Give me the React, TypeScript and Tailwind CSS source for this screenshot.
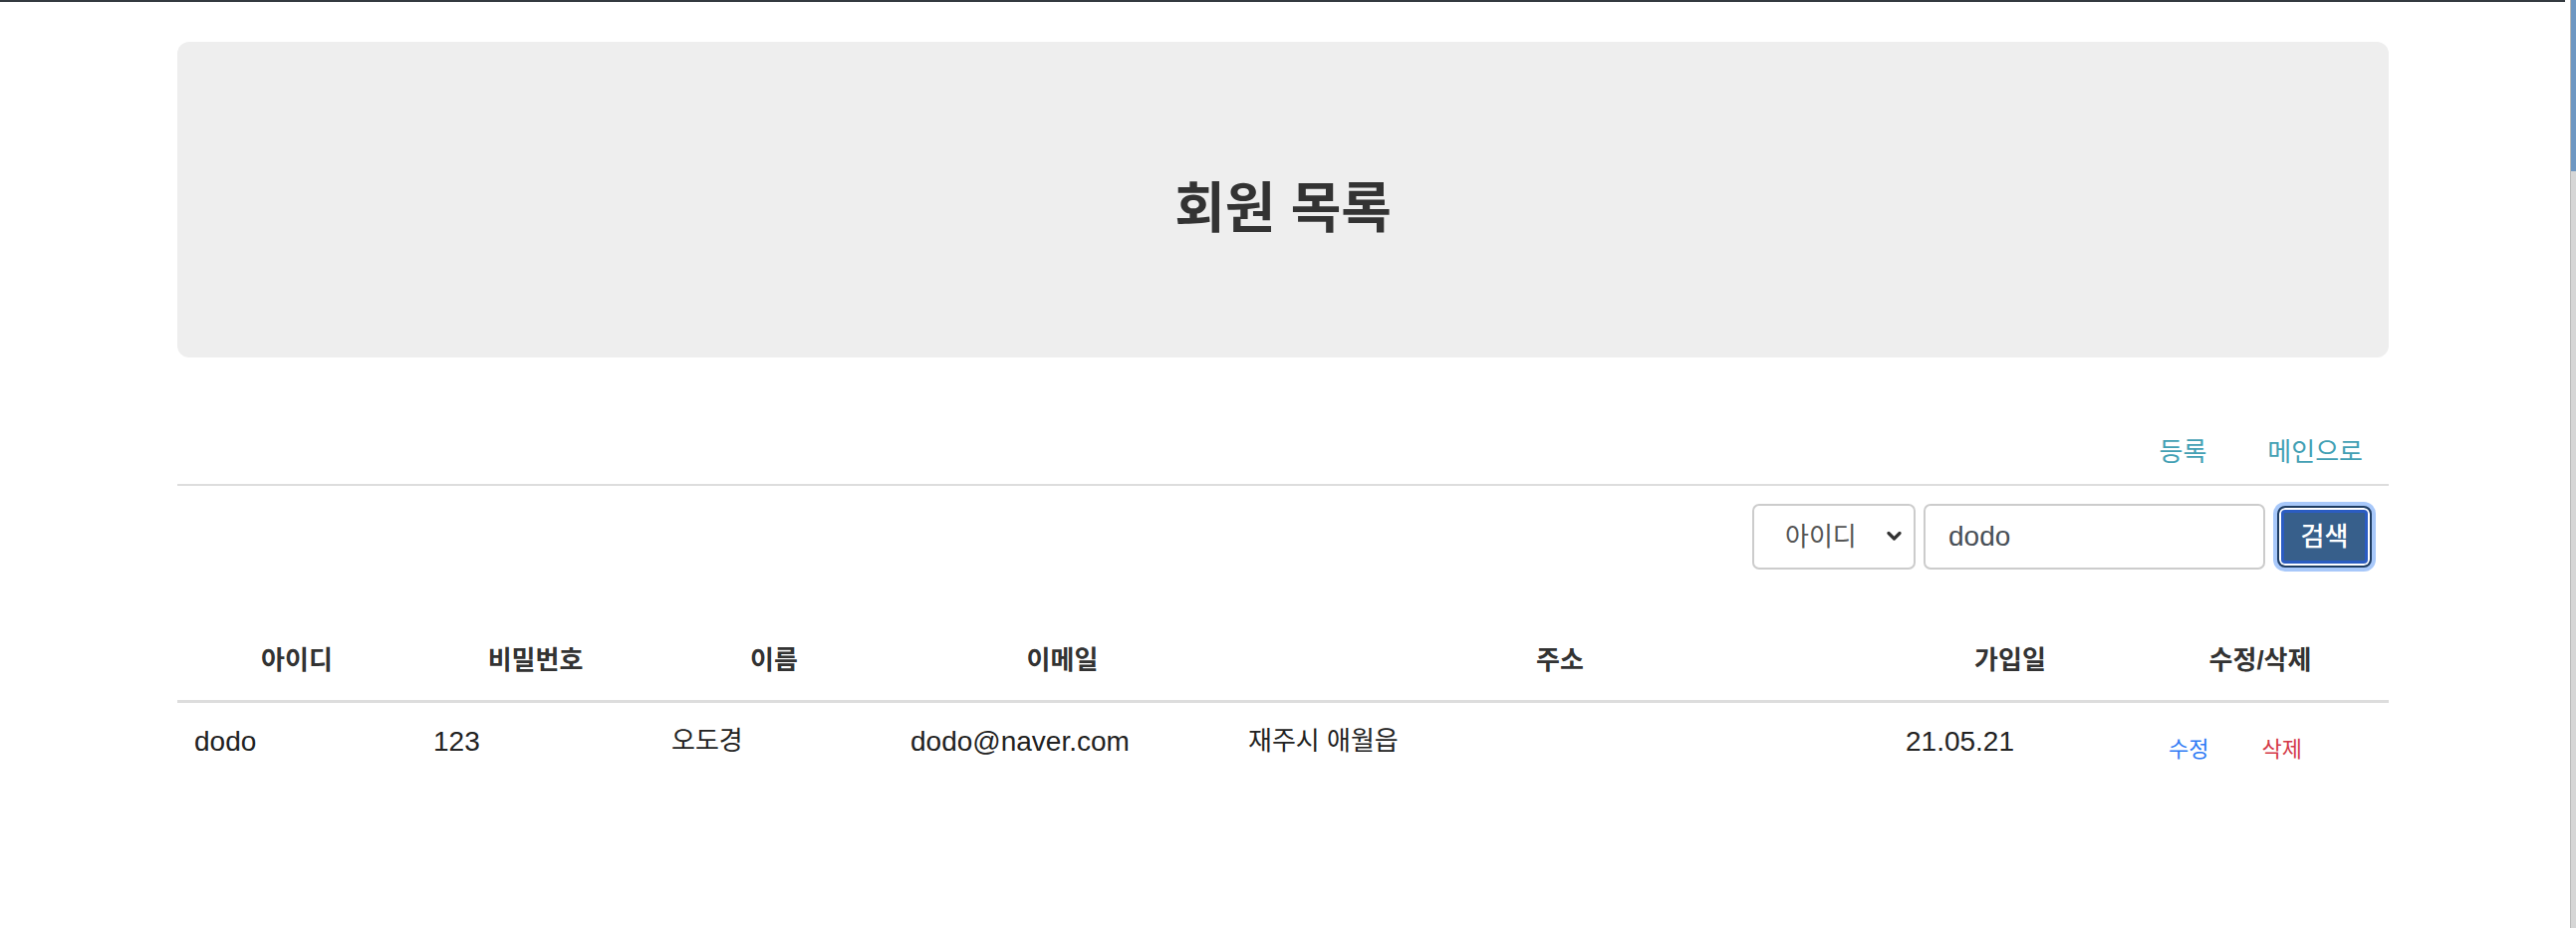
import React from 'react';

const FONT = { fontFamily: '"Liberation Sans", "Noto Sans CJK KR", sans-serif' };

const columns = [
  { label: '아이디', w: 'w-[240px]' },
  { label: '비밀번호', w: 'w-[239px]' },
  { label: '이름', w: 'w-[240px]' },
  { label: '이메일', w: 'w-[339px]' },
  { label: '주소', w: 'w-[660px]' },
  { label: '가입일', w: 'w-[244px]' },
  { label: '수정/삭제', w: 'w-[258px]' },
];

const members = [
  { id: 'dodo', pw: '123', name: '오도경', email: 'dodo@naver.com', addr: '재주시 애월읍', joined: '21.05.21' },
];

const td = 'px-[17px] pt-[19px] pb-[20px] leading-[39px] text-[#222222]';

export default function App() {
  return (
    <div className="flex min-h-screen bg-white text-[#212529]" style={FONT}>
      <div className="flex-1 border-t-2 border-[#343a40]">
        <div className="ml-[178px] w-[2220px]">
          {/* Header */}
          <div className="mt-[40px] h-[317px] rounded-[12px] bg-[#eeeeee] flex items-center justify-center pt-[18px]">
            <h2 className="text-[55px] font-semibold text-[#333333] leading-none">회원 목록</h2>
          </div>

          {/* Nav */}
          <nav className="mt-[63px] flex justify-end gap-[9px] h-[64px] items-center">
            <a href="#" className="px-[26px] text-[26px] text-[#42a0b4]">등록</a>
            <a href="#" className="px-[26px] text-[26px] text-[#42a0b4]">메인으로</a>
          </nav>
          <hr className="border-0 border-t-2 border-[#dddddd]" />

          {/* Search */}
          <div className="mt-[18px] flex justify-end items-center pr-[17px]">
            <div className="relative">
              <select
                defaultValue="id"
                className="appearance-none w-[164px] h-[66px] rounded-[7px] border-2 border-[#cccccc] bg-white pl-[31px] text-[26px] text-[#555555] outline-none"
                style={FONT}
              >
                <option value="id">아이디</option>
                <option value="name">이름</option>
              </select>
              <svg
                className="pointer-events-none absolute right-[14px] top-[27px] w-[15px] h-[11px]"
                viewBox="0 0 15 11"
                fill="none"
                stroke="#333333"
                strokeWidth="3.2"
                strokeLinecap="round"
                strokeLinejoin="round"
              >
                <path d="M2 2.5 L7.5 8 L13 2.5" />
              </svg>
            </div>
            <input
              defaultValue="dodo"
              className="ml-[8px] w-[343px] h-[66px] rounded-[7px] border-2 border-[#cccccc] px-[23px] text-[28px] text-[#495057] outline-none"
              style={FONT}
            />
            <button
              className="ml-[12px] w-[95px] h-[62px] rounded-[8px] border-2 border-[#1f3d63] bg-[#375f8b] text-white text-[26px] font-medium ring-4 ring-[#a8c8fa] shadow-[inset_0_0_0_2px_#ffffff,inset_0_0_0_5px_#2b5cc2]"
              style={FONT}
            >
              검색
            </button>
          </div>

          {/* Table */}
          <table className="mt-[52px] w-full border-collapse table-fixed text-[26px]">
            <thead>
              <tr>
                {columns.map((c) => (
                  <th
                    key={c.label}
                    className={`${c.w} px-[20px] py-[20px] text-center font-bold text-[#333333] leading-[39px] border-b-[3px] border-[#dddddd]`}
                  >
                    {c.label}
                  </th>
                ))}
              </tr>
            </thead>
            <tbody>
              {members.map((m) => (
                <tr key={m.id}>
                  <td className={`${td} text-[28px]`}>{m.id}</td>
                  <td className={`${td} text-[28px]`}>{m.pw}</td>
                  <td className={td}>{m.name}</td>
                  <td className={`${td} text-[28px]`}>{m.email}</td>
                  <td className={td}>{m.addr}</td>
                  <td className={`${td} text-[28px]`}>{m.joined}</td>
                  <td className="px-[17px] pt-[27px] pb-[12px] leading-[39px]">
                    <div className="flex items-center pl-[20px] text-[22px]">
                      <a href="#" className="text-[#2f7bf5]">수정</a>
                      <a href="#" className="ml-[53px] text-[#d43a48]">삭제</a>
                    </div>
                  </td>
                </tr>
              ))}
            </tbody>
          </table>
        </div>
      </div>

      {/* window scrollbar */}
      <div className="w-[6px] ml-[5px] flex flex-col border-l border-[#b8b8b8]">
        <div className="h-[172px] bg-[#6e97c2]"></div>
        <div className="flex-1 bg-[#d6d6d6]"></div>
      </div>
    </div>
  );
}
